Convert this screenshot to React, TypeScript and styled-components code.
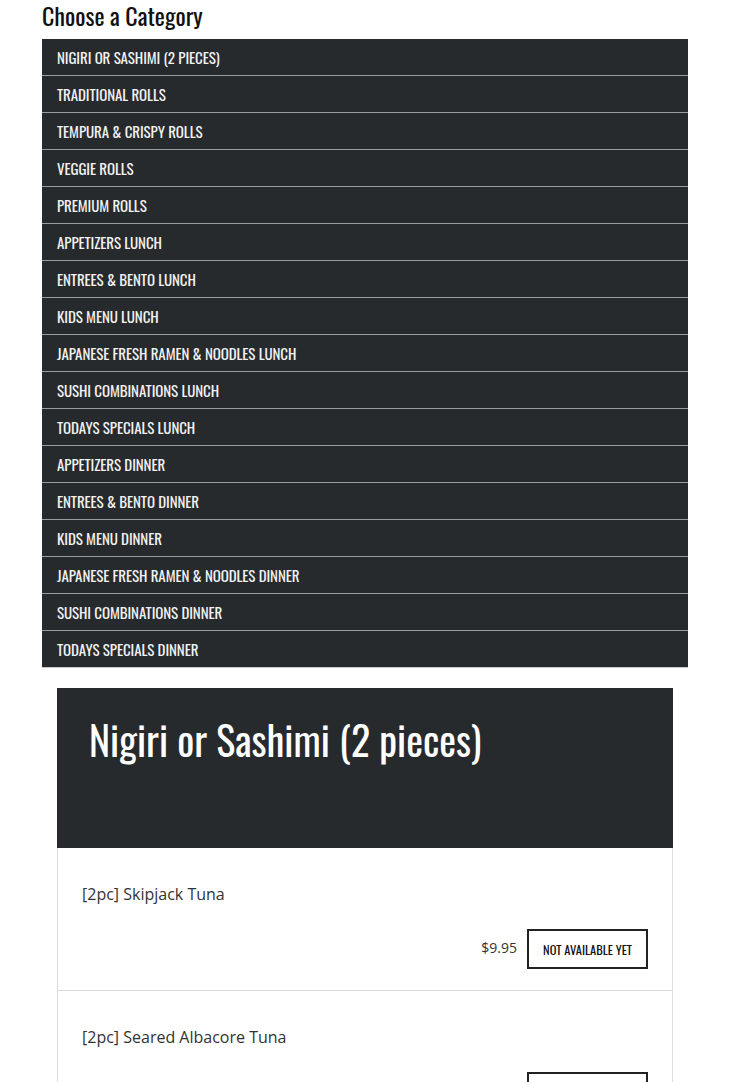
import React, { FC } from 'react';
import styled, { createGlobalStyle } from 'styled-components';

const CONDENSED = `Oswald, "Liberation Sans Narrow", "DejaVu Sans Condensed", sans-serif`;

const GlobalStyle = createGlobalStyle`
    html, body {
        margin: 0;
        padding: 0;
        background: #fff;
        font-family: "Open Sans", sans-serif;
    }
`;

const Page = styled.div`
    padding: 0 42px;
    box-sizing: border-box;
    width: 730px;
    height: 1082px;
    overflow: hidden;
`;

const Heading = styled.h2`
    margin: 0;
    height: 39px;
    line-height: 31px;
    font-family: ${CONDENSED};
    font-weight: 400;
    font-size: 24px;
    color: #111;
    white-space: nowrap;
`;

const CategoryList = styled.ul`
    list-style: none;
    margin: 0;
    padding: 0;
    background: #272a2d;
`;

const CategoryItem = styled.li`
    height: 36px;
    border-bottom: 1px solid #9a9c9e;
    display: flex;
    align-items: center;
    padding-left: 15px;
    &:last-child {
        border-bottom-color: #c8c8c8;
    }
`;

const CategoryLabel = styled.span`
    font-family: ${CONDENSED};
    font-size: 15px;
    font-weight: 400;
    color: #f2f2f2;
    text-transform: uppercase;
    letter-spacing: -0.1px;
    white-space: nowrap;
`;

const Card = styled.section`
    margin: 20px 15px 0;
`;

const CardHeader = styled.header`
    height: 160px;
    background: #272a2d;
    padding: 24px 32px 0;
    box-sizing: border-box;
`;

const CardTitle = styled.h1`
    margin: 0;
    font-family: ${CONDENSED};
    font-weight: 400;
    font-size: 40px;
    line-height: 54px;
    color: #fff;
    white-space: nowrap;
`;

const ItemRow = styled.div`
    border: 1px solid #dcdcdc;
    border-top: none;
    padding: 34px 24px 21px;
    display: flex;
    flex-direction: column;
    gap: 23px;
`;

const ItemName = styled.div`
    font-size: 16px;
    line-height: 24px;
    color: #333;
`;

const ItemFooter = styled.div`
    display: flex;
    justify-content: flex-end;
    align-items: center;
    gap: 10px;
`;

const Price = styled.span`
    font-size: 14px;
    color: #333;
    margin-top: -4px;
`;

const StatusButton = styled.button`
    width: 121px;
    height: 40px;
    border: 2px solid #222;
    background: #fff;
    color: #111;
    font-family: ${CONDENSED};
    font-size: 12.5px;
    text-transform: uppercase;
    padding: 0;
    cursor: default;
`;

const categories = [
    'Nigiri or Sashimi (2 pieces)',
    'Traditional Rolls',
    'Tempura & Crispy Rolls',
    'Veggie Rolls',
    'Premium Rolls',
    'Appetizers Lunch',
    'Entrees & Bento Lunch',
    'Kids Menu Lunch',
    'Japanese Fresh Ramen & Noodles Lunch',
    'Sushi Combinations Lunch',
    'Todays Specials Lunch',
    'Appetizers Dinner',
    'Entrees & Bento Dinner',
    'Kids Menu Dinner',
    'Japanese Fresh Ramen & Noodles Dinner',
    'Sushi Combinations Dinner',
    'Todays Specials Dinner',
];

const items = [
    { name: '[2pc] Skipjack Tuna', price: '$9.95' },
    { name: '[2pc] Seared Albacore Tuna', price: '$9.95' },
];

const MenuItem: FC<{ name: string; price: string }> = ({ name, price }) => (
    <ItemRow>
        <ItemName>{name}</ItemName>
        <ItemFooter>
            <Price>{price}</Price>
            <StatusButton>Not available yet</StatusButton>
        </ItemFooter>
    </ItemRow>
);

export default function App() {
    return (
        <>
            <GlobalStyle />
            <Page>
                <Heading>Choose a Category</Heading>
                <CategoryList>
                    {categories.map(c => (
                        <CategoryItem key={c}>
                            <CategoryLabel>{c}</CategoryLabel>
                        </CategoryItem>
                    ))}
                </CategoryList>
                <Card>
                    <CardHeader>
                        <CardTitle>Nigiri or Sashimi (2 pieces)</CardTitle>
                    </CardHeader>
                    {items.map(i => (
                        <MenuItem key={i.name} {...i} />
                    ))}
                </Card>
            </Page>
        </>
    );
}
